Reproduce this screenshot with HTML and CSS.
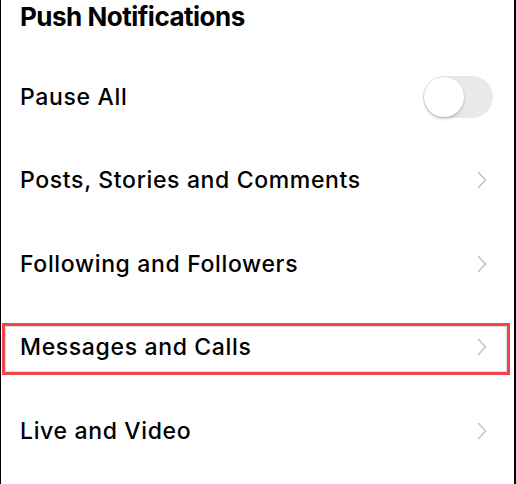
FILE: index.html
```html
<!DOCTYPE html>
<html lang="en">
<head>
<meta charset="utf-8">
<title>Push Notifications</title>
<link rel="stylesheet" href="styles.css">
</head>
<body>
<div class="screen">
  <h1 class="title">Push Notifications</h1>
  <ul class="list">
    <li class="row">
      <span class="label">Pause All</span>
      <span class="switch"><span class="knob"></span></span>
    </li>
    <li class="row">
      <span class="label">Posts, Stories and Comments</span>
      <svg class="chevron" viewBox="0 0 10 18" width="10" height="18"><path d="M1.5 1.5 L8.5 9 L1.5 16.5"/></svg>
    </li>
    <li class="row">
      <span class="label">Following and Followers</span>
      <svg class="chevron" viewBox="0 0 10 18" width="10" height="18"><path d="M1.5 1.5 L8.5 9 L1.5 16.5"/></svg>
    </li>
    <li class="row row-marked">
      <span class="label">Messages and Calls</span>
      <svg class="chevron" viewBox="0 0 10 18" width="10" height="18"><path d="M1.5 1.5 L8.5 9 L1.5 16.5"/></svg>
    </li>
    <li class="row">
      <span class="label">Live and Video</span>
      <svg class="chevron" viewBox="0 0 10 18" width="10" height="18"><path d="M1.5 1.5 L8.5 9 L1.5 16.5"/></svg>
    </li>
  </ul>
</div>
</body>
</html>
```
FILE: styles.css
```css
html, body {
  margin: 0;
  padding: 0;
  background: #fff;
}

.screen {
  box-sizing: border-box;
  width: 516px;
  height: 484px;
  overflow: hidden;
  border-left: 1px solid #000;
  border-right: 2px solid #000;
  font-family: Inter, "Noto Sans", sans-serif;
  color: #000;
  display: flex;
  flex-direction: column;
}

.title {
  margin: 0;
  padding: 0 0 0 19px;
  font-size: 26px;
  font-weight: 700;
  line-height: 34px;
  letter-spacing: -0.5px;
}

.list {
  list-style: none;
  margin: 21px 0 0;
  padding: 0;
  display: flex;
  flex-direction: column;
}

.row {
  position: relative;
  height: 83.5px;
  display: flex;
  align-items: center;
  justify-content: space-between;
  padding: 0 27px 0 19px;
}

.label {
  font-size: 23px;
  font-weight: 500;
  letter-spacing: 0.65px;
}

.chevron {
  fill: none;
  stroke: #c5c5c8;
  stroke-width: 1.6;
  stroke-linecap: round;
  stroke-linejoin: round;
}

.switch {
  position: relative;
  width: 70px;
  height: 42px;
  margin-right: -6px;
  border-radius: 21px;
  background: #e9e9eb;
}

.knob {
  position: absolute;
  left: 1px;
  top: 1px;
  width: 40px;
  height: 40px;
  border-radius: 50%;
  background: #fff;
  box-shadow: 0 2px 3px rgba(0, 0, 0, 0.2), 0 0 0 0.5px rgba(0, 0, 0, 0.06);
}

/* highlight frame around the marked row */
.row-marked::after {
  content: "";
  position: absolute;
  left: 1px;
  right: 4px;
  top: 17px;
  bottom: 14px;
  border: 3px solid #f0454a;
  box-shadow: inset 0 0 0 1px #dcdcdc;
  pointer-events: none;
}
```
